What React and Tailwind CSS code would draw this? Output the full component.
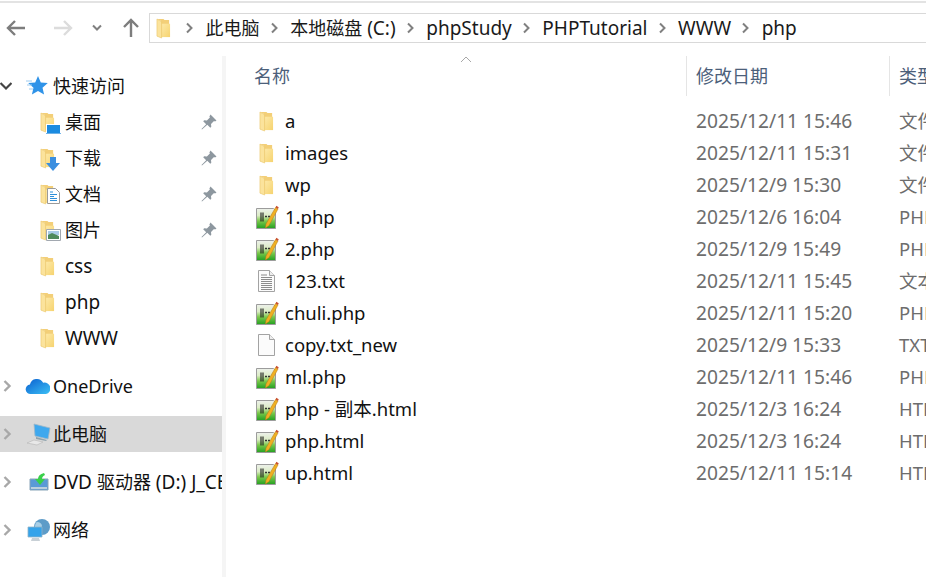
import React from "react";

const FONT = "font-['Noto_Sans','Noto_Sans_CJK_SC',sans-serif]";

function Folder({ id = "f" }) {
  return (
    <svg width="15" height="21" viewBox="0 0 16 22" preserveAspectRatio="none" className="shrink-0">
      <defs>
        <linearGradient id={id} x1="0" y1="0" x2="1" y2="1">
          <stop offset="0" stopColor="#fde9a8" />
          <stop offset="1" stopColor="#f6d36f" />
        </linearGradient>
      </defs>
      <path d="M1 1h7l1 1h5v18H5V3z" fill="#f3cf78" />
      <path d="M6 6h9v14H6z" fill={`url(#${id})`} />
      <path d="M1 1l5 3v17l-5-2z" fill="#fbe39c" stroke="#e9c566" strokeWidth=".6" />
    </svg>
  );
}

function PhpIcon({ id }) {
  return (
    <svg width="24" height="25" viewBox="0 0 24 25" className="shrink-0">
      <defs>
        <linearGradient id={id} x1="0" y1="0" x2="0" y2="1">
          <stop offset="0" stopColor="#eef1ec" />
          <stop offset=".35" stopColor="#dcecc6" />
          <stop offset=".62" stopColor="#7cc84c" />
          <stop offset="1" stopColor="#22a020" />
        </linearGradient>
      </defs>
      <path d="M1.500 3.500h17l2 2v18h-19z" fill={`url(#${id})`} stroke="#9c9c9c" />
      <path d="M6 7.500v9M8 7.500v9" stroke="#1c1c1c" strokeWidth="1.100" />
      <path d="M10 11.500h5" stroke="#333" strokeWidth="1.300" strokeDasharray="2 1" />
      <path d="M11 19L20.500 2.500l2.500 1.500L14 20.500l-3.500 2.500z" fill="#efb022" stroke="#b9781a" strokeWidth=".5" />
      <path d="M20.500 2.500l.8-1.700 2.400 1.400-.7 1.800z" fill="#c8502e" />
    </svg>
  );
}

function TxtIcon({ lines }) {
  return (
    <svg width="24" height="24" viewBox="0 0 24 24" className="shrink-0">
      <path d="M3.500 1.500h11l5 5v16h-16z" fill="#fbfbfb" stroke="#a3a3a3" />
      <path d="M14.500 1.500v5h5" fill="#eeeeee" stroke="#a3a3a3" />
      {lines && (
        <path d="M6 6h6M6 8.500h11M6 10.500h11M6 12.500h11M6 14.500h11M6 16.500h11M6 18.500h11M6 20.500h11" stroke="#8c8c8c" strokeWidth="1" />
      )}
    </svg>
  );
}

function Pin() {
  return (
    <svg width="16" height="16" viewBox="0 0 16 16" className="shrink-0">
      <path d="M9.500 0.500l6 6-1.500 1-1-.5-3 3 .3 2.700-1 1-3-3L1 15.500l-.5-.5 4.700-4.800-3-3 1-1 2.700.3 3-3-.5-1z" fill="#8d979f" />
    </svg>
  );
}

function Chevron({ down }) {
  return (
    <svg width="12" height="12" viewBox="0 0 12 12" className="shrink-0">
      {down ? (
        <path d="M0.500 3l5.500 5.500L11.500 3" fill="none" stroke="#444" strokeWidth="2.200" />
      ) : (
        <path d="M2.500 1l5 5-5 5" fill="none" stroke="#a8a8a8" strokeWidth="2.400" />
      )}
    </svg>
  );
}

function Crumb({ children }) {
  return (
    <>
      <svg width="10" height="12" viewBox="0 0 10 12" className="shrink-0 mx-[10.300px]">
        <path d="M2 1.500l4.500 4.500L2 10.500" fill="none" stroke="#808080" strokeWidth="2" />
      </svg>
      <span className="whitespace-nowrap">{children}</span>
    </>
  );
}

function QuickOverlay({ kind }) {
  if (kind === "desktop")
    return (
      <svg width="15" height="11" viewBox="0 0 15 11" className="absolute left-[6px] top-[15px]">
        <path d="M0 0h15v11H0z" fill="#fff" />
        <path d="M1 1h13v8H1z" fill="#1b8be0" />
        <path d="M0 9.500h15" stroke="#6fb3e8" />
      </svg>
    );
  if (kind === "down")
    return (
      <svg width="14" height="14" viewBox="0 0 14 14" className="absolute left-[6px] top-[12px]">
        <path d="M4 0h6v6h4l-7 8-7-8h4z" fill="#3b8fe0" />
      </svg>
    );
  if (kind === "doc")
    return (
      <svg width="13" height="16" viewBox="0 0 13 16" className="absolute left-[7px] top-[7px]">
        <path d="M.5.500h8l4 4v11H.5z" fill="#fff" stroke="#9a9a9a" />
        <path d="M3 4h3M3 6.500h7M3 8.500h4M3 10.500h7M3 12.500h7" stroke="#3090d8" />
      </svg>
    );
  return (
    <svg width="15" height="12" viewBox="0 0 15 12" className="absolute left-[6px] top-[12px]">
      <path d="M.5.500h14v11H.5z" fill="#fff" stroke="#a2a8b0" />
      <path d="M2 2h11v4H2z" fill="#a9cbe6" />
      <path d="M2 6l4-2 7 3v3H2z" fill="#4f8a5c" />
    </svg>
  );
}

function NavRow({ label, kind, id, pinned, latin }) {
  return (
    <div className="flex items-center h-9 pl-[40px]">
      <div className="relative w-[25px] h-[26px] shrink-0 flex items-center">
        <Folder id={id} />
        {kind && <QuickOverlay kind={kind} />}
      </div>
      <span className={latin ? "text-[19px]" : ""}>{label}</span>
      {pinned && (
        <span className="ml-auto mr-[5px]">
          <Pin />
        </span>
      )}
    </div>
  );
}

function TreeRow({ label, icon, selected }) {
  return (
    <div className={`flex items-center h-9 ${selected ? "bg-[#d9d9d9]" : ""} overflow-hidden`}>
      <span className="ml-[2px] w-[22px] shrink-0 flex justify-start">
        <Chevron />
      </span>
      <span className="w-[29px] h-[26px] shrink-0 flex items-center justify-center">{icon}</span>
      <span className="whitespace-nowrap">{label}</span>
    </div>
  );
}

const files = [
  ["a", "2025/12/11 15:46", "文件", "folder"],
  ["images", "2025/12/11 15:31", "文件", "folder"],
  ["wp", "2025/12/9 15:30", "文件", "folder"],
  ["1.php", "2025/12/6 16:04", "PHP", "php"],
  ["2.php", "2025/12/9 15:49", "PHP", "php"],
  ["123.txt", "2025/12/11 15:45", "文本", "txt"],
  ["chuli.php", "2025/12/11 15:20", "PHP", "php"],
  ["copy.txt_new", "2025/12/9 15:33", "TXT", "blank"],
  ["ml.php", "2025/12/11 15:46", "PHP", "php"],
  ["php - 副本.html", "2025/12/3 16:24", "HTM", "php"],
  ["php.html", "2025/12/3 16:24", "HTM", "php"],
  ["up.html", "2025/12/11 15:14", "HTM", "php"],
];

function FileIcon({ kind, id }) {
  if (kind === "folder") return <Folder id={id} />;
  if (kind === "php") return <PhpIcon id={id} />;
  if (kind === "txt") return <TxtIcon lines />;
  return <TxtIcon />;
}

export default function App() {
  return (
    <div className={`${FONT} w-[926px] h-[577px] overflow-hidden bg-white text-[18px] leading-none text-[#111]`}>
      <div className="h-[2px] mt-px bg-[#e3e3e3]" />
      {/* toolbar */}
      <div className="flex items-start h-[53px]">
        <div className="flex items-center w-[149px] h-[29px] mt-[10px] pl-[6px] shrink-0">
          <svg width="20" height="18" viewBox="0 0 20 18" className="shrink-0">
            <path d="M19 9H2M9 2L2 9l7 7" fill="none" stroke="#7d7d7d" strokeWidth="2.400" />
          </svg>
          <svg width="20" height="18" viewBox="0 0 20 18" className="ml-[27px] shrink-0">
            <path d="M1 9h17M11 2l7 7-7 7" fill="none" stroke="#dcdcdc" strokeWidth="2.400" />
          </svg>
          <svg width="10" height="8" viewBox="0 0 10 8" className="ml-[19px] shrink-0">
            <path d="M1 1.500l4 4 4-4" fill="none" stroke="#808080" strokeWidth="2" />
          </svg>
          <svg width="18" height="20" viewBox="0 0 18 20" className="ml-[20px] shrink-0">
            <path d="M9 19V2M2 9l7-7 7 7" fill="none" stroke="#7d7d7d" strokeWidth="2.400" />
          </svg>
        </div>
        <div className="flex items-center flex-1 h-[30px] mt-[10px] border border-r-0 border-[#d9d9d9] pl-[6px] text-[#1a1a1a]">
          <Folder id="addr" />
          <span className="w-[4px]" />
          <Crumb>此电脑</Crumb>
          <Crumb>
            本地磁盘<span className="text-[19px]"> (C:)</span>
          </Crumb>
          <Crumb>
            <span className="text-[19px]">phpStudy</span>
          </Crumb>
          <Crumb>
            <span className="text-[19px]">PHPTutorial</span>
          </Crumb>
          <Crumb>
            <span className="text-[19px]">WWW</span>
          </Crumb>
          <Crumb>
            <span className="text-[19px]">php</span>
          </Crumb>
        </div>
      </div>
      <div className="flex h-[521px]">
        {/* sidebar */}
        <aside className="w-[226px] shrink-0 border-r-[4px] border-[#f5f5f5] pt-[12px]">
          <div className="w-[222px] flex flex-col gap-3">
            <div>
              <div className="flex items-center h-9">
                <span className="w-[24px] shrink-0">
                  <Chevron down />
                </span>
                <span className="w-[29px] shrink-0 flex items-center justify-start">
                  <svg width="24" height="20" viewBox="0 0 24 20">
                    <path d="M14 0l2.800 6.500 7 .6-5.300 4.600 1.600 6.800-6.100-3.600-6.100 3.600 1.600-6.800L4.200 7.100l7-.6z" fill="#2f93e8" />
                    <path d="M2 5h6M3 9h5M5 13h4" stroke="#9ccbf0" strokeWidth="1" />
                  </svg>
                </span>
                <span>快速访问</span>
              </div>
              <NavRow label="桌面" kind="desktop" id="n1" pinned />
              <NavRow label="下载" kind="down" id="n2" pinned />
              <NavRow label="文档" kind="doc" id="n3" pinned />
              <NavRow label="图片" kind="pic" id="n4" pinned />
              <NavRow label="css" id="n5" latin />
              <NavRow label="php" id="n6" latin />
              <NavRow label="WWW" id="n7" latin />
            </div>
            <TreeRow
              label="OneDrive"
              icon={
                <svg width="25" height="17" viewBox="0 0 26 18" className="mr-[3px]">
                  <defs>
                    <linearGradient id="od" x1="0" y1="0" x2="1" y2="1">
                      <stop offset="0" stopColor="#0a5fd0" />
                      <stop offset="1" stopColor="#3cc0f5" />
                    </linearGradient>
                  </defs>
                  <path d="M6 17a5 5 0 0 1-1-10 7.500 7.500 0 0 1 14-2 5.500 5.500 0 0 1 3 12z" fill="url(#od)" />
                </svg>
              }
            />
            <TreeRow
              selected
              label="此电脑"
              icon={
                <svg width="24" height="24" viewBox="0 0 24 24">
                  <path d="M7 2l16 4-2 11-13-3z" fill="#3ea8ee" stroke="#9fb8c8" strokeWidth=".8" />
                  <path d="M9 15l11 3-1 1-10-2z" fill="#8fa3ad" />
                  <path d="M0 21l7-3 9 2-6 3z" fill="#e8e8e8" stroke="#b5b5b5" strokeWidth=".6" />
                </svg>
              }
            />
            <TreeRow
              label={
                <>
                  <span className="text-[19px]">DVD </span>驱动器<span className="text-[19px]"> (D:) J_CENA_X64FRE_ZH-CN_DV5</span>
                </>
              }
              icon={
                <svg width="20" height="20" viewBox="0 0 20 20">
                  <path d="M1 7h18v11H1z" fill="#5a9ad6" stroke="#8aa5b8" />
                  <path d="M2 15h16v2H2z" fill="#bcd0dc" />
                  <path d="M15 1c-4 1-6 3-6 6H6l5 6 5-6h-3c0-2 1-3 3-4z" fill="#39d04a" />
                </svg>
              }
            />
            <TreeRow
              label="网络"
              icon={
                <svg width="24" height="24" viewBox="0 0 24 24">
                  <circle cx="15" cy="9" r="8" fill="#5e9cc8" />
                  <path d="M10 4c3 0 5 2 5 4s-3 1-4 3-3 0-3-2 1-5 2-5z" fill="#a9cfe6" />
                  <path d="M1 9h14v10H1z" fill="#35a3ea" stroke="#8fb3c8" strokeWidth=".8" />
                  <path d="M5 20h7l1 3H4z" fill="#c8d0d6" />
                </svg>
              }
            />
          </div>
        </aside>
        {/* file list */}
        <main className="flex-1 min-w-0 relative">
          <svg width="12" height="7" viewBox="0 0 12 7" className="absolute left-[234px] top-[0px]">
            <path d="M1 6l5-5 5 5" fill="none" stroke="#a8a8a8" />
          </svg>
          <div className="flex h-[40px] items-center text-[#4c607a]">
            <div className="w-[461px] h-full shrink-0 flex items-center pl-[28px] border-r border-[#e5e5e5]">名称</div>
            <div className="w-[203px] h-full shrink-0 flex items-center pl-[9px] border-r border-[#e5e5e5]">修改日期</div>
            <div className="flex-1 h-full flex items-center pl-[9px] whitespace-nowrap overflow-hidden">类型</div>
          </div>
          <div className="pt-[9px]">
            {files.map(([name, date, type, kind], i) => (
              <div key={name} className="flex items-center h-8 whitespace-nowrap">
                <span className="w-[59px] shrink-0 pl-[22px] flex justify-center">
                  <FileIcon kind={kind} id={`file${i}`} />
                </span>
                <span className="w-[411px] shrink-0 text-[18.5px]">{name}</span>
                <span className="w-[203px] shrink-0 text-[#6d6d6d] text-[19.2px]">{date}</span>
                <span className="text-[#6d6d6d] text-[18.5px]">{type}</span>
              </div>
            ))}
          </div>
        </main>
      </div>
    </div>
  );
}
